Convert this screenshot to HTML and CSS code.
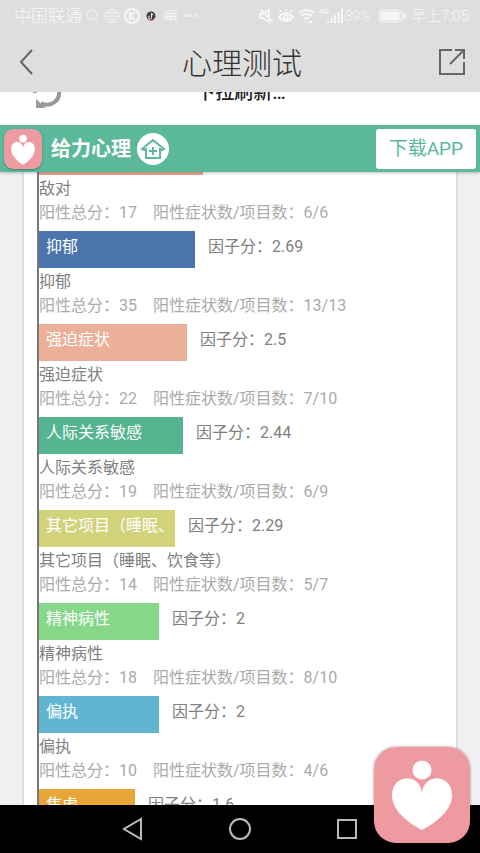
FILE: index.html
```html
<!DOCTYPE html>
<html lang="zh-CN">
<head>
  <meta charset="utf-8">
  <meta name="viewport" content="width=device-width, initial-scale=1">
  <title>心理测试</title>
  <link rel="stylesheet" href="styles.css">
</head>

<body>
  <div class="status">
    <span class="carrier">中国联通</span>
    <svg width="14" height="16" viewBox="0 0 14 16"><circle cx="6" cy="7" r="5"/><path d="M9.500 11l3.500 4"/></svg>
    <svg width="16" height="16" viewBox="0 0 16 16"><circle cx="8" cy="8" r="6.500"/><path d="M1 5h14M3 8q3 2 4-1M9 7q1 3 4 1M5 11q3 2 6 0"/></svg>
    <svg width="16" height="16" viewBox="0 0 16 16" stroke-width="2"><circle cx="8" cy="8" r="7"/><path d="M6 4v8M11 4L6 8l5 4"/></svg>
    <svg class="wide" width="10" height="16" viewBox="0 0 10 16"><circle cx="5" cy="8" r="4.500" fill="#433c46" stroke="none"/><path d="M5.500 5v4.500a1.500 1.500 0 1 1-1.500-1.500M5.500 5q.5 2 2 2" stroke="#fff"/><path d="M2 11q4 3 7-1" stroke="#d4708a"/></svg>
    <svg class="wide" width="13" height="16" viewBox="0 0 13 16"><path d="M0 3h13M1 5.500h11v6H1zM1 8.500h11M6.500 3v11M4 5v7M9 5v7"/></svg>
    <span class="more">···</span>
    <span class="spacer"></span>
    <svg width="15" height="16" viewBox="0 0 15 16" stroke-width="2"><path d="M1 6h3l6-4v12L4 10H1zM2 2l12 12"/></svg>
    <svg width="16" height="16" viewBox="0 0 16 16" stroke-width="2"><path d="M1 9q7-8 14 0-7 8-14 0zM3 4L2 2M8 3V1M13 4l1-2"/><circle cx="8" cy="9" r="2"/></svg>
    <svg width="17" height="16" viewBox="0 0 17 16" stroke-width="2"><path d="M1 5q7.500-6 15 0M3 8q5.500-4 11 0M6 11q2.500-2 5 0M7 14h1M11 14h3"/></svg>
    <span class="net">4G</span>
    <svg class="signal" width="16" height="16" viewBox="0 0 16 16" stroke-width="2"><path d="M1 15v-2M4.500 15v-5M8 15V7M11.500 15V4M15 15V1"/></svg>
    <span class="percent">89%</span>
    <svg class="battery" width="28" height="14" viewBox="0 0 28 14"><rect x="1" y="1" width="23" height="12" rx="2"/><path d="M3 3h18v8H3z" fill="#f6f6f6"/><path d="M26.500 4v6" stroke-width="2"/></svg>
    <span class="clock">早上7:05</span>
  </div>

  <header class="titlebar">
    <button class="icon-btn" type="button" aria-label="返回">
      <svg width="16" height="28" viewBox="0 0 16 28"><path d="M14 2L3 14l11 12"/></svg>
    </button>
    <h1>心理测试</h1>
    <button class="icon-btn" type="button" aria-label="分享">
      <svg width="28" height="28" viewBox="0 0 28 28"><path d="M14 2H2v24h24V14M12 16L25 3M17 2h9v9"/></svg>
    </button>
  </header>

  <div class="refresh">
    <svg width="30" height="30" viewBox="0 0 30 30"><path d="M27 13a12 12 0 0 1-18 12M3 15A12 12 0 0 1 23 5" fill="none" stroke="#999" stroke-width="4"/><path d="M4 21v10h11z" fill="#999"/></svg>
    <span>下拉刷新…</span>
  </div>

  <div class="banner">
    <svg class="logo" width="38" height="40" viewBox="0 0 96 96" preserveAspectRatio="none"><rect width="96" height="96" rx="22" fill="#ee9aa1"/><circle cx="48" cy="23" r="9.500" fill="#fff"/><path d="M48 46C46 25 18 27 18 48c0 14 13 28 30 38 17-10 30-24 30-38 0-21-28-23-30-2z" fill="#fff"/></svg>
    <strong>给力心理</strong>
    <svg class="home" width="32" height="32" viewBox="0 0 32 32"><circle cx="16" cy="16" r="16" fill="#fff"/><path d="M5 16L16 7l11 9-2 1-2-1v9H9v-9l-2 1zM16 14v8M12 18h8" fill="none" stroke="#5bb89a" stroke-width="2"/></svg>
    <a class="download" href="#">下载APP</a>
  </div>

  <main>
    <section class="card">
      <ul class="factors">
        <li>
          <div class="row"><span class="bar coral" style="width: 41%"></span></div>
          <p class="name">敌对</p>
          <p class="detail">阳性总分：17　阳性症状数/项目数：6/6</p>
        </li>
        <li>
          <div class="row"><span class="bar blue" style="width: 39%">抑郁</span><span class="score">因子分：2.69</span></div>
          <p class="name">抑郁</p>
          <p class="detail">阳性总分：35　阳性症状数/项目数：13/13</p>
        </li>
        <li>
          <div class="row"><span class="bar peach" style="width: 37%">强迫症状</span><span class="score">因子分：2.5</span></div>
          <p class="name">强迫症状</p>
          <p class="detail">阳性总分：22　阳性症状数/项目数：7/10</p>
        </li>
        <li>
          <div class="row"><span class="bar green" style="width: 36%">人际关系敏感</span><span class="score">因子分：2.44</span></div>
          <p class="name">人际关系敏感</p>
          <p class="detail">阳性总分：19　阳性症状数/项目数：6/9</p>
        </li>
        <li>
          <div class="row"><span class="bar olive" style="width: 34%">其它项目（睡眠、</span><span class="score">因子分：2.29</span></div>
          <p class="name">其它项目（睡眠、饮食等）</p>
          <p class="detail">阳性总分：14　阳性症状数/项目数：5/7</p>
        </li>
        <li>
          <div class="row"><span class="bar lime" style="width: 30%">精神病性</span><span class="score">因子分：2</span></div>
          <p class="name">精神病性</p>
          <p class="detail">阳性总分：18　阳性症状数/项目数：8/10</p>
        </li>
        <li>
          <div class="row"><span class="bar sky" style="width: 30%">偏执</span><span class="score">因子分：2</span></div>
          <p class="name">偏执</p>
          <p class="detail">阳性总分：10　阳性症状数/项目数：4/6</p>
        </li>
        <li>
          <div class="row"><span class="bar orange" style="width: 24%">焦虑</span><span class="score">因子分：1.6</span></div>
        </li>
      </ul>
    </section>
  </main>

  <nav class="keys">
    <button type="button" aria-label="后退"><svg width="24" height="24" viewBox="0 0 24 24"><path d="M20 2v20L3 12z"/></svg></button>
    <button type="button" aria-label="主页"><svg width="24" height="24" viewBox="0 0 24 24"><circle cx="12" cy="12" r="10"/></svg></button>
    <button type="button" aria-label="最近"><svg width="24" height="24" viewBox="0 0 24 24"><path d="M3 3h18v18H3z"/></svg></button>
  </nav>

  <a class="float" href="#" aria-label="给力心理">
    <svg width="96" height="96" viewBox="0 0 96 96"><rect width="96" height="96" rx="22" fill="#ee9aa1"/><circle cx="48" cy="23" r="9.500" fill="#fff"/><path d="M48 46C46 25 18 27 18 48c0 14 13 26 30 35 17-9 30-21 30-35 0-21-28-23-30-2z" fill="#fff"/></svg>
  </a>
</body>
</html>
```
FILE: styles.css
```css
* {box-sizing:border-box;}

body {
  display:flex;
  flex-direction:column;
  height:100vh;
  margin:0;
  overflow:hidden;
  background:#fff;
  color:#808080;
  font-family:Roboto,"Noto Sans CJK SC",sans-serif;
  font-size:16px;
  line-height:24px;
}

h1, p, ul {margin:0; padding:0;}
svg {display:block; flex:none;}
button {padding:0; border:0; background:none;}
a {text-decoration:none;}

.status {
  display:flex;
  flex:none;
  align-items:center;
  gap:4px;
  height:32px;
  padding:0 11px 0 14px;
  background:#dedede;
  color:#f6f6f6;
  font-weight:300;
}
.status svg {fill:none; stroke:#f6f6f6;}
.status .wide {margin:0 2px;}
.carrier {font-size:17px;}
.more {font-weight:700;}
.spacer {flex:1;}
.net {align-self:flex-start; font-size:8px; font-weight:500;}
.status .signal {margin:0 -2px 0 -6px;}
.percent {font-size:14px; font-style:italic;}
.status .battery {margin:0 1px 0 4px;}
.clock {font-size:15px;}

.titlebar {
  display:flex;
  flex:none;
  align-items:center;
  justify-content:space-between;
  height:60px;
  padding:0 14px 0 18px;
  background:#dedede;
}
.titlebar h1 {padding-top:4px; color:#333; font-size:30px; font-weight:300; line-height:36px;}
.icon-btn {display:flex; justify-content:center; width:28px;}
.icon-btn svg {fill:none; stroke:#666; stroke-width:2;}
.icon-btn:first-child {justify-content:flex-start;}

.refresh {
  display:flex;
  flex:none;
  align-items:flex-end;
  height:33px;
  padding:0 32px 17px;
  overflow:hidden;
}
.refresh span {flex:1; padding-right:28px; color:#222; font-size:19px; font-weight:500; line-height:30px; text-align:center;}

.banner {
  display:flex;
  flex:none;
  align-items:center;
  position:relative;
  z-index:1;
  height:47px;
  padding:0 4px;
  background:#5bb89a;
  box-shadow:0 1px 3px rgba(0,0,0,.25);
}
.logo {border-radius:9px; box-shadow:0 1px 2px rgba(0,0,0,.3);}
.banner strong {margin:0 6px 0 9px; color:#fff; font-size:20px;}
.download {
  margin-left:auto;
  padding:0 13px;
  border-radius:3px;
  background:#fff;
  color:#5bb89a;
  font-size:19px;
  line-height:40px;
}

main {flex:1; min-height:0; padding:0 24px; overflow:hidden; background:#f0f0f2;}
.card {
  margin-top:-34px;
  padding:0 17px 0 13px;
  background:#fff;
  box-shadow:0 0 3px rgba(0,0,0,.25);
}
.factors {border-left:2px solid #777; list-style:none;}
.factors li {padding-bottom:6px;}
.row {display:flex; height:37px; line-height:32px;}
.bar {flex:none; padding-left:7px; overflow:hidden; color:#fff; white-space:nowrap;}
.score {margin-left:13px; white-space:nowrap;}
.name {padding-top:2px;}
.detail {color:#aaa;}

.coral {background:#e8a692;}
.blue {background:#4b74ad;}
.peach {background:#ebb097;}
.green {background:#56b491;}
.olive {background:#d2d27b;}
.lime {background:#86d788;}
.sky {background:#61b5d2;}
.orange {background:#e8a638;}

.keys {
  display:flex;
  flex:none;
  align-items:center;
  justify-content:center;
  gap:83px;
  height:48px;
  background:#000;
}
.keys svg {fill:none; stroke:#bbb; stroke-width:2;}

.float {
  position:absolute;
  right:10px;
  bottom:10px;
  z-index:2;
  border-radius:22px;
  box-shadow:0 0 3px rgba(80,30,30,.5);
}
```
